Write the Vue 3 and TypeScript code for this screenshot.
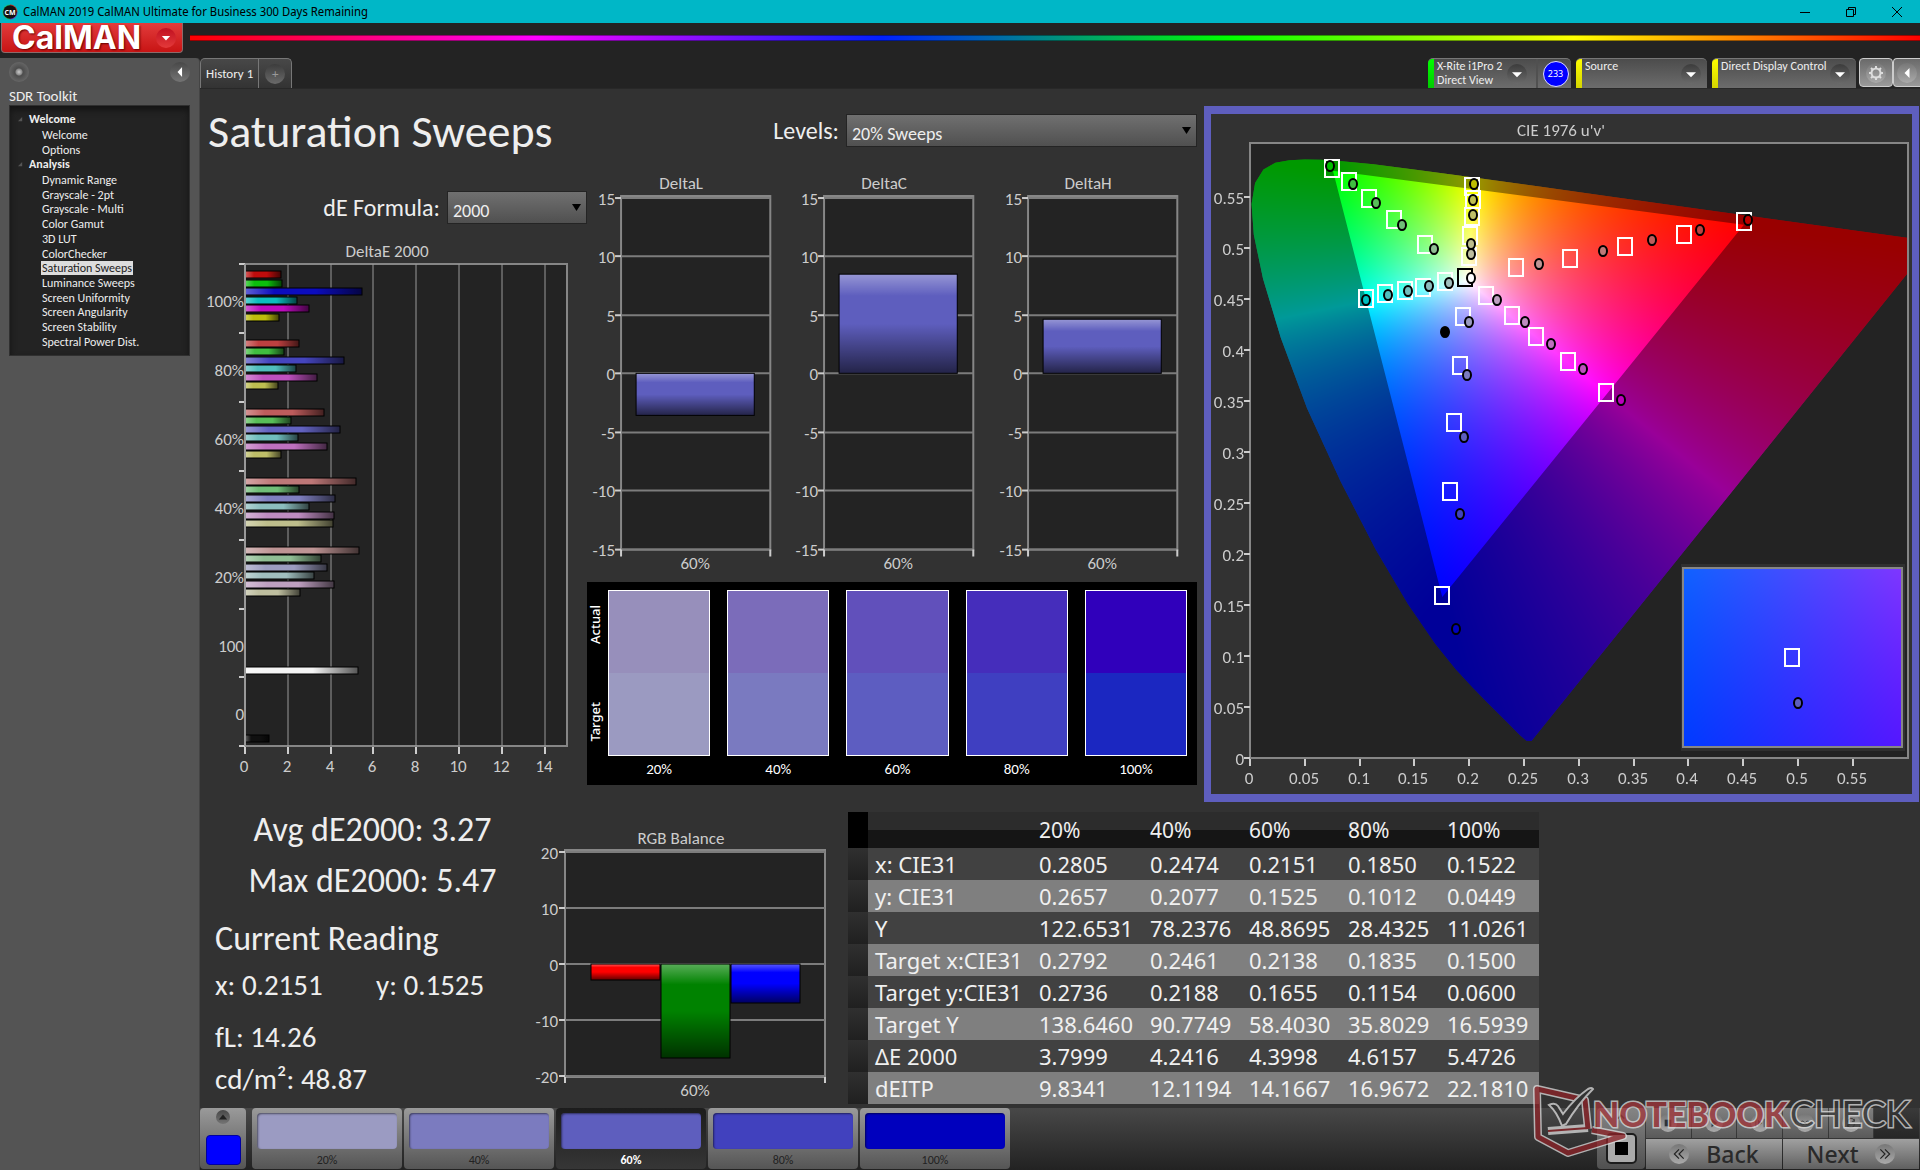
<script setup lang="ts">
import { onMounted, ref } from 'vue'

type Point = [number, number]
interface Marker { at: Point; fill: string }

const sections = [
  { title: 'Welcome', items: ['Welcome', 'Options'] },
  {
    title: 'Analysis',
    items: [
      'Dynamic Range', 'Grayscale - 2pt', 'Grayscale - Multi', 'Color Gamut', '3D LUT', 'ColorChecker',
      'Saturation Sweeps', 'Luminance Sweeps', 'Screen Uniformity', 'Screen Angularity',
      'Screen Stability', 'Spectral Power Dist.',
    ],
  },
]
const currentPage = 'Saturation Sweeps'

/* DeltaE bar chart: one group of R, G, B, C, M, Y per saturation level */
const deltaE = [
  { label: '100%', values: [1.69, 1.73, 5.47, 2.45, 3.0, 1.6], colors: ['#be0c0c', '#0cbe0c', '#0c0cbe', '#0cbebe', '#be0cbe', '#bebe0c'] },
  { label: '80%', values: [2.53, 1.81, 4.62, 2.4, 3.37, 1.54], colors: ['#be4040', '#40be40', '#4545be', '#50bebe', '#be50be', '#bebe50'] },
  { label: '60%', values: [3.7, 2.14, 4.45, 2.47, 3.84, 1.69], colors: ['#be5c5c', '#58be58', '#6262c0', '#70bebe', '#be70be', '#bebe68'] },
  { label: '40%', values: [5.2, 2.53, 4.22, 3.0, 4.17, 4.1], colors: ['#be7878', '#70be78', '#7f7fc0', '#8cbebe', '#be8cc0', '#bebe8c'] },
  { label: '20%', values: [5.34, 3.57, 3.84, 3.24, 4.17, 2.58], colors: ['#be9494', '#90be94', '#9c9cc0', '#a0bebe', '#be9fc0', '#bebe9f'] },
  { label: '100', values: [5.3], colors: ['#f4f4f4'] },
  { label: '0', values: [1.13], colors: ['#101010'] },
]
const deUnit = 21.4
const deBars = deltaE.flatMap((group, g) =>
  group.values.map((value, i) => ({
    width: Math.round(value * deUnit),
    y: Math.round((group.values.length === 1 ? 82 : 31) + g * 68.9 + i * 8.5),
    color: group.colors[i],
  })),
)
const deTicks = [0, 2, 4, 6, 8, 10, 12, 14]
const deTickX = (t: number) => Math.round(41 + t * deUnit)
const deTickY = (n: number) => Math.round(24 + n * 68.9)

const deltaCharts = [
  { title: 'DeltaL', top: 0, bottom: -3.6 },
  { title: 'DeltaC', top: 8.5, bottom: 0 },
  { title: 'DeltaH', top: 4.6, bottom: 0 },
]
const deltaTicks = [15, 10, 5, 0, -5, -10, -15]
const deltaY = (v: number) => Math.round(201 - v * 11.7)

const rgbTicks = [20, 10, 0, -10, -20]
const rgbY = (v: number) => Math.round(144 - v * 5.6)
const rgbBars = [
  { value: -2.8, color: '#ff0000' },
  { value: -16.7, color: '#008200' },
  { value: -7, color: '#0000ff' },
]

const levels = [
  { label: '20%', actual: '#978fbb', target: '#9b9ac1' },
  { label: '40%', actual: '#7b6cba', target: '#7a7ac0' },
  { label: '60%', actual: '#6150bb', target: '#5d5dc1' },
  { label: '80%', actual: '#452dbb', target: '#3f3fc1' },
  { label: '100%', actual: '#3000bb', target: '#1b27c1' },
]
const steps = [
  { label: '20%', color: '#9b9bc2' },
  { label: '40%', color: '#7b7bbf' },
  { label: '60%', color: '#5e5ebe' },
  { label: '80%', color: '#4141be' },
  { label: '100%', color: '#0000be' },
]

const rows = [
  ['x: CIE31', '0.2805', '0.2474', '0.2151', '0.1850', '0.1522'],
  ['y: CIE31', '0.2657', '0.2077', '0.1525', '0.1012', '0.0449'],
  ['Y', '122.6531', '78.2376', '48.8695', '28.4325', '11.0261'],
  ['Target x:CIE31', '0.2792', '0.2461', '0.2138', '0.1835', '0.1500'],
  ['Target y:CIE31', '0.2736', '0.2188', '0.1655', '0.1154', '0.0600'],
  ['Target Y', '138.6460', '90.7749', '58.4030', '35.8029', '16.5939'],
  ['ΔE 2000', '3.7999', '4.2416', '4.3998', '4.6157', '5.4726'],
  ['dEITP', '9.8341', '12.1194', '14.1667', '16.9672', '22.1810'],
]

/* CIE 1976 diagram, in the units of its viewBox */
const cieW = 701
const cieH = 680
const plotX = (u: number) => Math.round(39 + u * 1096)
const plotY = (v: number) => Math.round(644 - v * 1020)
const cieTicks = Array.from({ length: 12 }, (_, i) => Math.round(i * 5) / 100)

const targets: Point[] = [
  [121, 54], [138, 67], [158, 84], [183, 105], [214, 130],
  [261, 72], [262, 85], [261, 102], [259, 121], [258, 142],
  [533, 107], [473, 120], [414, 132], [359, 144], [305, 153],
  [155, 184], [174, 179], [194, 176], [212, 173], [234, 167],
  [275, 181], [301, 201], [325, 222], [357, 247], [395, 278],
  [252, 202], [249, 251], [243, 308], [239, 377], [231, 481],
  [581, 543],
]
const readings: Marker[] = [
  { at: [119, 52], fill: '#00be00' }, { at: [142, 70], fill: '#40be40' }, { at: [165, 89], fill: '#58be58' },
  { at: [191, 111], fill: '#70be78' }, { at: [223, 135], fill: '#90be94' },
  { at: [263, 70], fill: '#bebe00' }, { at: [262, 86], fill: '#bebe50' }, { at: [262, 101], fill: '#bebe68' },
  { at: [260, 140], fill: '#bebe9f' }, { at: [260, 130], fill: '#bebe8c' },
  { at: [537, 106], fill: '#be0000' }, { at: [489, 116], fill: '#be4040' }, { at: [441, 126], fill: '#be5c5c' },
  { at: [392, 137], fill: '#be7878' }, { at: [328, 150], fill: '#be9494' },
  { at: [155, 186], fill: '#00bebe' }, { at: [177, 181], fill: '#50bebe' }, { at: [197, 177], fill: '#70bebe' },
  { at: [218, 172], fill: '#8cbebe' }, { at: [238, 169], fill: '#a0bebe' },
  { at: [286, 186], fill: '#be9fc0' }, { at: [314, 208], fill: '#be8cc0' }, { at: [340, 230], fill: '#be70be' },
  { at: [372, 255], fill: '#be50be' }, { at: [410, 286], fill: '#be00be' },
  { at: [258, 208], fill: '#9b9bc2' }, { at: [256, 261], fill: '#7b7bbf' }, { at: [253, 323], fill: '#5e5ebe' },
  { at: [249, 400], fill: '#4141be' }, { at: [245, 515], fill: '#0000be' },
  { at: [260, 164], fill: '#ffffff' }, { at: [234, 218], fill: '#000000' }, { at: [587, 589], fill: '#5e5ebe' },
]

/* spectral locus, CIE 1931 xy */
const locus: Point[] = [
  [0.1741, 0.005], [0.1714, 0.0051], [0.1689, 0.0069], [0.1644, 0.0109], [0.1566, 0.0177], [0.151, 0.0227],
  [0.144, 0.0297], [0.1355, 0.0399], [0.1241, 0.0578], [0.1096, 0.0868], [0.0913, 0.1327], [0.0687, 0.2007],
  [0.0454, 0.295], [0.0235, 0.4127], [0.0082, 0.5384], [0.0039, 0.6548], [0.0139, 0.7502], [0.0389, 0.812],
  [0.0743, 0.8338], [0.1142, 0.8262], [0.1547, 0.8059], [0.1929, 0.7816], [0.2296, 0.7543], [0.3016, 0.6923],
  [0.3731, 0.6245], [0.4441, 0.5547], [0.5125, 0.4866], [0.5752, 0.4242], [0.627, 0.3725], [0.6915, 0.3083],
  [0.7347, 0.2653],
]
const gamut: Point[] = [[0.64, 0.33], [0.21, 0.71], [0.15, 0.06]]

const canvas = ref<HTMLCanvasElement | null>(null)

function toPlot([x, y]: Point): Point {
  const d = -2 * x + 12 * y + 3
  return [39 + ((4 * x) / d) * 1096, 644 - ((9 * y) / d) * 1020]
}

function colorAt(u: number, v: number): [number, number, number] {
  const X = 9 * u
  const Y = 4 * v
  const Z = 12 - 3 * u - 20 * v
  const r = Math.max(0, 2.0414 * X - 0.5649 * Y - 0.3447 * Z)
  const g = Math.max(0, -0.9693 * X + 1.876 * Y + 0.0416 * Z)
  const b = Math.max(0, 0.0134 * X - 0.1184 * Y + 1.0154 * Z)
  const k = 255 / Math.max(r, g, b, 0.0001)
  return [r * k, g * k, b * k]
}

function paint(w: number, h: number, uv: (x: number, y: number) => Point): HTMLCanvasElement {
  const layer = document.createElement('canvas')
  layer.width = w
  layer.height = h
  const c = layer.getContext('2d')!
  const image = c.createImageData(w, h)
  for (let y = 0; y < h; y++) {
    for (let x = 0; x < w; x++) {
      const [u, v] = uv(x, y)
      const [r, g, b] = colorAt(u, v)
      const i = (y * w + x) * 4
      image.data[i] = r
      image.data[i + 1] = g
      image.data[i + 2] = b
      image.data[i + 3] = 255
    }
  }
  c.putImageData(image, 0, 0)
  return layer
}

function trace(c: CanvasRenderingContext2D, points: Point[]) {
  points.map(toPlot).forEach(([x, y], i) => (i ? c.lineTo(x, y) : c.moveTo(x, y)))
  c.closePath()
}

onMounted(() => {
  const c = canvas.value?.getContext('2d')
  if (!c) return
  const spectrum = paint(cieW, cieH, (x, y) => [(x - 39) / 1096, (644 - y) / 1020])
  c.save()
  c.beginPath()
  c.rect(39, 30, 657, 614)
  c.clip()
  c.beginPath()
  trace(c, locus)
  c.clip()
  c.drawImage(spectrum, 0, 0)
  c.beginPath()
  c.rect(0, 0, cieW, cieH)
  trace(c, gamut)
  c.fillStyle = 'rgba(0, 0, 0, 0.4)'
  c.fill('evenodd')
  c.restore()
  c.fillStyle = '#303030'
  c.fillRect(470, 450, 224, 187)
  const detail = paint(219, 179, (x, y) => [0.1865 + (x - 110) / 2430, 0.33 - (y - 90) / 3060])
  c.drawImage(detail, 472, 454)
})
</script>

<template>
  <div class="app">
    <header class="titlebar">
      <svg class="app-icon" viewBox="0 0 16 16" aria-hidden="true">
        <circle cx="8" cy="8" r="7.5" fill="#2b6" />
        <path d="M8 .5A7.5 7.5 0 0 1 15.5 8L8 8Z" fill="#c33" />
        <path d="M15.5 8A7.5 7.5 0 0 1 8 15.5L8 8Z" fill="#63c" />
        <circle cx="8" cy="8" r="6.8" fill="#111" />
        <text x="8" y="11" text-anchor="middle" class="app-icon-text">CM</text>
      </svg>
      <span class="window-title">CalMAN 2019 CalMAN Ultimate for Business 300 Days Remaining</span>
      <button class="win" aria-label="Minimize"><svg viewBox="0 0 12 12"><path d="M1 6.5h10" /></svg></button>
      <button class="win" aria-label="Restore"><svg viewBox="0 0 12 12"><path d="M1.5 3.5h7v7h-7zM3.5 3.5v-2h7v7h-2" /></svg></button>
      <button class="win" aria-label="Close"><svg viewBox="0 0 12 12"><path d="M1 1l10 10M11 1L1 11" /></svg></button>
    </header>

    <div class="brandbar">
      <button class="brand">
        <span>CalMAN</span>
        <i class="round red"><svg viewBox="0 0 12 12"><path d="M1 3.5h10L6 9z" fill="#fff" /></svg></i>
      </button>
      <div class="rainbow"></div>
    </div>

    <div class="body">
      <aside class="sidebar">
        <div class="side-tools">
          <button class="round dot" aria-label="Pin"></button>
          <button class="round" aria-label="Collapse"><svg viewBox="0 0 12 12"><path d="M8.5 0v12L3 6z" fill="#fff" /></svg></button>
        </div>
        <h2>SDR Toolkit</h2>
        <nav class="tree">
          <section v-for="s in sections" :key="s.title">
            <h3><svg viewBox="0 0 6 6"><path d="M5 0v5H0z" fill="#555" /></svg>{{ s.title }}</h3>
            <ul>
              <li v-for="item in s.items" :key="item">
                <a href="#" :class="{ current: item === currentPage }">{{ item }}</a>
              </li>
            </ul>
          </section>
        </nav>
      </aside>

      <main class="workspace">
        <div class="tabs">
          <div class="tab-group">
            <button class="tab">History 1</button>
            <button class="tab add" aria-label="Add history"><i class="round dark">+</i></button>
          </div>
          <div class="devices">
            <div class="device meter">
              <span class="status green"></span>
              <button class="device-name">X-Rite i1Pro 2<br />Direct View</button>
              <i class="round dark"><svg viewBox="0 0 12 12"><path d="M0 4h12L6 10z" fill="#fff" /></svg></i>
              <span class="badge-cell"><span class="badge">233</span></span>
            </div>
            <div class="device source">
              <span class="status"></span>
              <button class="device-name">Source</button>
              <i class="round dark"><svg viewBox="0 0 12 12"><path d="M0 4h12L6 10z" fill="#fff" /></svg></i>
            </div>
            <div class="device display">
              <span class="status"></span>
              <button class="device-name">Direct Display Control</button>
              <i class="round dark"><svg viewBox="0 0 12 12"><path d="M0 4h12L6 10z" fill="#fff" /></svg></i>
            </div>
            <button class="square" aria-label="Settings">
              <i class="round light"><svg viewBox="0 0 16 16" class="gear"><circle cx="8" cy="8" r="4.5" fill="none" stroke="#ddd" stroke-width="2" /><path d="M8 1v2M8 13v2M1 8h2M13 8h2M3 3l1.5 1.5M11.5 11.5L13 13M13 3l-1.5 1.5M4.5 11.5L3 13" stroke="#ddd" stroke-width="2" /></svg></i>
            </button>
            <button class="square last" aria-label="Expand">
              <i class="round light"><svg viewBox="0 0 12 12"><path d="M9 0v12L3 6z" fill="#fff" /></svg></i>
            </button>
          </div>
        </div>

        <div class="content">
          <svg class="defs" aria-hidden="true">
            <defs>
              <linearGradient id="shade-h" x1="0" x2="1" y1="0" y2="0">
                <stop offset="0" stop-color="#fff" stop-opacity=".35" />
                <stop offset=".25" stop-color="#fff" stop-opacity="0" />
                <stop offset=".6" stop-color="#000" stop-opacity="0" />
                <stop offset="1" stop-color="#000" stop-opacity=".65" />
              </linearGradient>
              <linearGradient id="shade-v" x1="0" x2="0" y1="0" y2="1">
                <stop offset="0" stop-color="#fff" stop-opacity=".35" />
                <stop offset=".22" stop-color="#fff" stop-opacity="0" />
                <stop offset=".5" stop-color="#000" stop-opacity="0" />
                <stop offset="1" stop-color="#000" stop-opacity=".62" />
              </linearGradient>
            </defs>
          </svg>

          <div class="upper">
            <section class="col-a">
              <h1>Saturation Sweeps</h1>
              <div class="field formula">
                <label for="formula">dE Formula:</label>
                <span class="select"><select id="formula"><option>2000</option></select></span>
              </div>
              <svg class="chart" viewBox="0 0 383 545" role="img" aria-label="DeltaE 2000">
                <text x="183" y="11" class="mid">DeltaE 2000</text>
                <rect x="41" y="24" width="322" height="482" class="plot" />
                <g v-for="t in deTicks" :key="t">
                  <line :x1="deTickX(t)" :x2="deTickX(t)" y1="24" y2="506" class="grid" />
                  <line :x1="deTickX(t)" :x2="deTickX(t)" y1="507" y2="514" class="tick" />
                  <text :x="deTickX(t) - 1" y="526" class="mid">{{ t }}</text>
                </g>
                <line v-for="n in 8" :key="n" x1="35" x2="41" :y1="deTickY(n - 1)" :y2="deTickY(n - 1)" class="tick" />
                <text v-for="(g, i) in deltaE" :key="g.label" x="40" :y="deTickY(i) + 37" class="end">{{ g.label }}</text>
                <g v-for="(b, i) in deBars" :key="i">
                  <rect x="41" :y="b.y" :width="b.width" height="7" :fill="b.color" />
                  <rect x="41" :y="b.y" :width="b.width" height="7" fill="url(#shade-h)" class="outline" />
                </g>
                <line x1="41" x2="41" y1="24" y2="506" class="axis" />
              </svg>
            </section>

            <section class="col-b">
              <div class="field levels">
                <label for="levels">Levels:</label>
                <span class="select"><select id="levels"><option>20% Sweeps</option></select></span>
              </div>
              <div class="deltas">
                <svg v-for="d in deltaCharts" :key="d.title" class="chart" viewBox="0 0 203 408" role="img" :aria-label="d.title">
                  <text x="94" y="11" class="mid">{{ d.title }}</text>
                  <rect x="34" y="24" width="149" height="353" class="plot" />
                  <line x1="34" x2="183" y1="25" y2="25" class="band" />
                  <g v-for="t in deltaTicks" :key="t">
                    <line x1="34" x2="183" :y1="deltaY(t)" :y2="deltaY(t)" class="grid" />
                    <line x1="28" x2="34" :y1="deltaY(t)" :y2="deltaY(t)" class="tick" />
                    <text x="28" :y="deltaY(t) + 1" class="end">{{ t }}</text>
                  </g>
                  <path d="M34 377v7M183 377v7" class="tick" />
                  <rect x="49" :y="deltaY(d.top)" width="118" :height="deltaY(d.bottom) - deltaY(d.top)" fill="#5e5ebe" />
                  <rect x="49" :y="deltaY(d.top)" width="118" :height="deltaY(d.bottom) - deltaY(d.top)" fill="url(#shade-v)" class="outline" />
                  <text x="108" y="391" class="mid">60%</text>
                </svg>
              </div>
              <div class="swatches">
                <div class="swatch-axis"><span>Actual</span><span>Target</span></div>
                <figure v-for="l in levels" :key="l.label">
                  <div class="pair">
                    <div :style="{ background: l.actual }"></div>
                    <div :style="{ background: l.target }"></div>
                  </div>
                  <figcaption>{{ l.label }}</figcaption>
                </figure>
              </div>
            </section>

            <section class="cie">
              <svg class="cie-base" viewBox="0 0 701 680" aria-hidden="true">
                <rect x="39" y="29" width="658" height="615" class="plot" />
              </svg>
              <canvas ref="canvas" :width="cieW" :height="cieH"></canvas>
              <svg class="chart" viewBox="0 0 701 680" role="img" aria-label="CIE 1976 u'v' diagram">
                <text x="350" y="16" class="mid">CIE 1976 u'v'</text>
                <rect x="39" y="29" width="658" height="615" class="frame" />
                <g v-for="t in cieTicks" :key="t">
                  <line :x1="plotX(t)" :x2="plotX(t)" y1="645" y2="652" class="tick" />
                  <text :x="plotX(t) - 1" y="664" class="mid">{{ t }}</text>
                  <line x1="33" x2="39" :y1="plotY(t)" :y2="plotY(t)" class="tick" />
                  <text x="33" :y="plotY(t) + 1" class="end">{{ t }}</text>
                </g>
                <rect x="472" y="454" width="219" height="179" class="frame" />
                <rect v-for="(p, i) in targets" :key="'t' + i" :x="p[0] - 7" :y="p[1] - 8" width="14" height="17" class="target" />
                <rect x="247" y="155" width="14" height="17" class="target white-point" />
                <ellipse v-for="(m, i) in readings" :key="'m' + i" :cx="m.at[0]" :cy="m.at[1]" rx="4" ry="5" :fill="m.fill" class="reading" />
              </svg>
            </section>
          </div>

          <div class="lower">
            <section class="readouts">
              <p class="stat">Avg dE2000: 3.27</p>
              <p class="stat">Max dE2000: 5.47</p>
              <h2>Current Reading</h2>
              <div class="xy"><span>x: 0.2151</span><span>y: 0.1525</span></div>
              <p class="lum first">fL: 14.26</p>
              <p class="lum">cd/m²: 48.87</p>
            </section>

            <svg class="chart rgb" viewBox="0 0 318 285" role="img" aria-label="RGB Balance">
              <text x="151" y="18" class="mid">RGB Balance</text>
              <rect x="35" y="30" width="260" height="227" class="plot" />
              <line x1="35" x2="295" y1="31" y2="31" class="band" />
              <g v-for="t in rgbTicks" :key="t">
                <line x1="35" x2="295" :y1="rgbY(t)" :y2="rgbY(t)" class="grid" />
                <line x1="29" x2="35" :y1="rgbY(t)" :y2="rgbY(t)" class="tick" />
                <text x="28" :y="rgbY(t) + 1" class="end">{{ t }}</text>
              </g>
              <path d="M35 257v6M295 257v6" class="tick" />
              <g v-for="(b, i) in rgbBars" :key="i">
                <rect :x="61 + i * 70" y="144" width="69" :height="rgbY(b.value) - 144" :fill="b.color" />
                <rect :x="61 + i * 70" y="144" width="69" :height="rgbY(b.value) - 144" fill="url(#shade-v)" class="outline" />
              </g>
              <text x="165" y="270" class="mid">60%</text>
            </svg>

            <table>
              <colgroup><col class="c-mark" /><col class="c-label" /><col class="c-first" /><col /><col /><col /><col /></colgroup>
              <thead>
                <tr><td class="mark"></td><td></td><th v-for="l in levels" :key="l.label" scope="col">{{ l.label }}</th></tr>
              </thead>
              <tbody>
                <tr v-for="r in rows" :key="r[0]">
                  <td class="mark"></td>
                  <th scope="row">{{ r[0] }}</th>
                  <td v-for="(c, i) in r.slice(1)" :key="i">{{ c }}</td>
                </tr>
              </tbody>
            </table>
          </div>
        </div>

        <footer class="bottombar">
          <button class="pattern" aria-label="Pattern color">
            <i class="round small"><svg viewBox="0 0 12 12"><path d="M1 9h10L6 3z" fill="#222" /></svg></i>
            <span class="pattern-color"></span>
          </button>
          <button v-for="s in steps" :key="s.label" class="step" :class="{ active: s.label === '60%' }">
            <span class="step-color" :style="{ background: s.color }"></span>
            <span>{{ s.label }}</span>
          </button>
          <div class="controls">
            <div class="stop">
              <button class="stop-top" aria-label="Show"><svg viewBox="0 0 12 12"><path d="M2 8l4-4 4 4" /></svg></button>
              <button class="stop-main" aria-label="Stop"><i></i></button>
            </div>
            <div class="transport">
              <div class="row">
                <button aria-label="Stop reading"><i class="round light small"><svg viewBox="0 0 12 12"><path d="M2 2h8v8H2z" fill="#333" /></svg></i></button>
                <button aria-label="Play"><i class="round light small"><svg viewBox="0 0 12 12"><path d="M3 1l7 5-7 5z" fill="#333" /></svg></i></button>
                <button aria-label="Step"><i class="round light small"><svg viewBox="0 0 12 12"><path d="M1 1v10M11 1v10M4 3l4 3-4 3z" fill="#333" stroke="#333" /></svg></i></button>
                <button aria-label="Continuous"><i class="round light small"><svg viewBox="0 0 12 12"><path d="M6 6C4 3 1 3 1 6s3 3 5 0 5-3 5 0-3 3-5 0" fill="none" stroke="#333" /></svg></i></button>
                <button aria-label="Refresh"><i class="round light small"><svg viewBox="0 0 12 12"><path d="M10 4a4 4 0 0 0-8 1M2 8a4 4 0 0 0 8-1M10 1v3H7M2 11V8h3" fill="none" stroke="#333" /></svg></i></button>
                <button class="off" disabled aria-label="Unavailable"><i class="round small"></i></button>
              </div>
              <div class="row nav">
                <button><i class="round light"><svg viewBox="0 0 12 12"><path d="M6 2L2 6l4 4M10 2L6 6l4 4" fill="none" stroke="#222" /></svg></i>Back</button>
                <button>Next<i class="round light"><svg viewBox="0 0 12 12"><path d="M2 2l4 4-4 4M6 2l4 4-4 4" fill="none" stroke="#222" /></svg></i></button>
              </div>
            </div>
          </div>
        </footer>
      </main>
    </div>

    <svg class="watermark" viewBox="0 0 385 84" role="img" aria-label="Notebookcheck">
      <path d="M58 47L55 18L7 7L8 55L38 71L93 54L62 48" class="wm-edge" />
      <path d="M18 49L58 46" class="wm-edge" />
      <path d="M58 47L55 18L7 7L8 55L38 71L93 54L62 48" class="wm-red" />
      <path d="M18 49L58 46" class="wm-red thin" />
      <path d="M19 23q6-3 9 1l5 8q12-16 25-25q4-2 5 0q-15 15-27 35l-4 2q-5-14-13-21z" class="wm-check" />
      <text x="63" y="45" class="wm-text bold">NOTEBOOK</text>
      <text x="260" y="45" class="wm-text">CHECK</text>
    </svg>
  </div>
</template>

<style>
body { margin: 0; background: #232323; }
</style>

<style scoped>
.app {
  --ui: Carlito, Lato, "Open Sans", sans-serif;
  position: relative;
  display: flex;
  flex-direction: column;
  min-height: 100vh;
  overflow: hidden;
  background: #232323;
  color: #eee;
  font: 16px/20px var(--ui);
}
*, *::before, *::after { box-sizing: border-box; }
button, select { margin: 0; padding: 0; border: 0; background: none; color: inherit; font: inherit; }
h1, h2, h3, p, ul, figure { margin: 0; padding: 0; font-weight: 400; }
ul { list-style: none; }
a { color: inherit; text-decoration: none; }
i { font-style: normal; }

.titlebar { display: flex; align-items: center; height: 23px; padding-left: 2px; background: #00b7c7; color: #000; }
.app-icon { width: 16px; height: 16px; margin-right: 5px; }
.app-icon-text { font: 700 7px "Open Sans", sans-serif; fill: #fff; }
.window-title { flex: 1; font: 12px/20px "Noto Sans Display", "Open Sans", sans-serif; }
.win { display: grid; place-items: center; width: 46px; height: 22px; }
.win svg { width: 12px; height: 12px; fill: none; stroke: #000; }

.brandbar { display: flex; align-items: flex-start; gap: 7px; height: 35px; }
.brand {
  display: flex; align-items: center; width: 182px; height: 30px; margin-left: 1px; padding-left: 10px;
  border: 1px solid #8d6a6a; border-top: 0; border-radius: 0 0 4px 4px;
  background: linear-gradient(#e23c3c, #c81414);
  color: #fff; font: 700 32px/28px Inter, sans-serif; text-shadow: 1px 1px 2px #600;
}
.brand span { flex: 1; text-align: left; }
.rainbow {
  flex: 1; height: 6px; margin-top: 12px;
  background: linear-gradient(90deg, #f00, #f0f 20%, #0020ff 40%, #0f0 60%, #ff0 80%, #f00);
  box-shadow: inset 0 1px rgba(0, 0, 0, .4), inset 0 -1px rgba(0, 0, 0, .4);
}

.round {
  display: grid; place-items: center; flex: none; width: 20px; height: 20px; border-radius: 50%;
  background: linear-gradient(#484848, #747474);
}
.round svg { width: 10px; height: 10px; }
.round.red { margin-right: 6px; background: linear-gradient(#c01020, #e43a3a); }
.round.dark { background: linear-gradient(#3c3c3c, #6a6a6a); color: #999; line-height: 18px; }
.round.light { background: linear-gradient(#777, #aaa); }
.round.small { width: 14px; height: 14px; }
.round .gear { width: 16px; height: 16px; }

.body { display: flex; flex: 1; }
.sidebar { flex: none; width: 200px; padding: 4px 9px 0; border-radius: 0 4px 0 0; background: #545454; border-right: 1px solid #444; }
.side-tools { display: flex; justify-content: space-between; }
.dot { background: radial-gradient(circle, #ccc 0, #888 3px, #4c4c4c 4px, #666 10px); }
.sidebar h2 { margin-top: 3px; font-size: 15px; line-height: 22px; }
.tree {
  margin-top: -2px; padding: 6px 0 9px; height: 251px; border: 1px solid #303030; background: #232323;
  box-shadow: inset 0 4px 6px #141414;
}
.tree h3 { display: flex; align-items: center; gap: 6px; padding-left: 8px; font-size: 12px; line-height: 15px; font-weight: 700; }
.tree h3 svg { width: 5px; height: 5px; }
.tree ul { display: flex; flex-direction: column; justify-content: space-between; height: 30px; padding: 1px 0 0 31px; }
.tree section:last-child ul { height: 177px; }
.tree li { height: 14px; font-size: 12px; line-height: 14px; }
.tree li a { display: inline-block; padding: 0 1px; }
.tree .current { background: #ddd; color: #222; }

.workspace { display: flex; flex: 1; flex-direction: column; min-width: 0; background: #323232; }
.tabs { display: flex; justify-content: space-between; height: 31px; background: #232323; border-bottom: 1px solid #282828; }
.tab-group { display: flex; width: 92px; border: 1px solid #777; border-bottom: 0; border-radius: 5px 5px 0 0; background: linear-gradient(#484848, #333); }
.tab { width: 58px; color: #eee; font-size: 13px; }
.tab.add { display: grid; place-items: center; width: 33px; border-left: 1px solid #777; }
.devices { display: flex; align-items: flex-start; }
.device { display: flex; height: 30px; margin-right: 5px; padding-right: 6px; border-radius: 5px 5px 0 0; background: linear-gradient(#4c4c4c, #6c6c6c); overflow: hidden; border-top: 1px solid #777; }
.meter { width: 143px; padding-right: 0; }
.source { width: 131px; }
.display { width: 144px; margin-right: 3px; }
.status { width: 6px; background: linear-gradient(#ff0, #d4d400); }
.status.green { background: linear-gradient(#0f0, #0c0); }
.device-name { flex: 1; padding-left: 3px; font-size: 12px; line-height: 14px; text-align: left; white-space: nowrap; align-self: flex-start; }
.device .round { margin-top: 5px; }
.badge-cell { display: grid; place-items: center; width: 35px; margin-left: 9px; padding-left: 2px; border-left: 2px solid #505050; }
.badge { width: 26px; height: 26px; border: 1px solid #ddf; border-radius: 50%; background: #00f; color: #fff; font: 9px/24px "Noto Sans", sans-serif; text-align: center; }
.square { display: grid; place-items: center; width: 34px; height: 29px; border: 1px solid #ccc; border-radius: 4px; background: linear-gradient(#6a6a6a, #9a9a9a); }
.square.last { width: 27px; border-right: 0; border-radius: 4px 0 0 4px; }

.content { flex: 1; }
.defs { position: absolute; width: 0; height: 0; }
.upper { display: grid; grid-template-columns: 383fr 617fr 715fr; align-items: start; padding: 0 1px 0 4px; }
h1 { margin-top: 12px; padding-left: 4px; font-size: 46px; line-height: 60px; white-space: nowrap; }
.field { display: flex; align-items: center; justify-content: flex-end; gap: 7px; }
.field label { font-size: 24px; line-height: 33px; white-space: nowrap; }
.formula { margin: 30px 0 16px; }
.formula .select { width: 140px; }
.levels { margin-top: 25px; }
.levels .select { width: 351px; }
.select { position: relative; }
.select select {
  display: block; width: 100%; height: 33px; padding: 6px 5px 0; appearance: none; border: 1px solid #242424;
  background: linear-gradient(#707070, #505050); color: #eee; font-size: 18px; line-height: 24px;
}
.select::after { content: ""; position: absolute; top: 13px; right: 6px; width: 9px; height: 7px; background: #000; clip-path: polygon(0 0, 100% 0, 50% 100%); }

.chart { display: block; width: 100%; height: auto; overflow: visible; }
.chart text { font: 17px var(--ui); fill: #ccc; dominant-baseline: central; }
.chart .mid { text-anchor: middle; }
.chart .end { text-anchor: end; }
.plot { fill: #232323; stroke: #868686; stroke-width: 2; }
.frame { fill: none; stroke: #868686; stroke-width: 2; }
.grid { stroke: #7c7c7c; stroke-width: 2; }
.col-a .grid { stroke-width: 1; stroke: #999; }
.axis { stroke: #999; stroke-width: 2; }
.band { stroke: #868686; stroke-width: 4; }
.tick { fill: none; stroke: #ccc; stroke-width: 2; }
.outline { stroke: #000; stroke-width: 1; }
.target { fill: none; stroke: #fff; stroke-width: 2; }
.white-point { stroke: #000; }
.reading { stroke: #000; stroke-width: 2; }

.col-b { padding-right: 7px; }
.deltas { display: grid; grid-template-columns: repeat(3, 1fr); margin-top: 25px; }
.swatches { display: flex; gap: 17px; height: 203px; margin-top: 1px; padding: 8px 10px 0 0; background: #000; }
.swatch-axis { display: flex; flex-direction: column; justify-content: space-between; width: 17px; height: 166px; margin-right: -13px; padding: 15px 0 14px; }
.swatch-axis span { writing-mode: vertical-rl; transform: rotate(180deg); color: #fff; font: 500 13px/17px "Noto Sans", sans-serif; }
.swatches figure { flex: 1; }
.pair { display: flex; flex-direction: column; height: 166px; border: 1px solid #fff; }
.pair div { flex: 1; }
figcaption { padding-top: 4px; color: #fff; font-size: 15px; line-height: 18px; text-align: center; }

.cie { display: grid; margin-top: 17px; border: solid #5e5ebe; border-width: 8px 7px; background: #323232; }
.cie > * { grid-area: 1 / 1; width: 100%; height: auto; display: block; }

.lower { display: grid; grid-template-columns: 326fr 318fr 691fr 380fr; align-items: start; padding: 0 1px 0 4px; margin-top: 1px; }
.readouts { padding-top: 1px; }
.stat { padding-left: 11px; font-size: 34px; line-height: 51px; text-align: center; }
.readouts h2 { margin-top: 7px; padding-left: 11px; font-size: 34px; line-height: 52px; }
.xy { display: flex; padding-left: 11px; font-size: 29px; line-height: 40px; }
.xy span:first-child { width: 161px; }
.lum { padding-left: 11px; font-size: 29px; line-height: 42px; }
.lum.first { margin-top: 11px; }
.rgb { margin-top: 17px; }
table { width: 100%; margin-top: 9px; border-collapse: collapse; table-layout: fixed; font: 22px/24px "Noto Sans", sans-serif; color: #f0f0f0; }
.c-mark { width: 20px; }
.c-label { width: 164px; }
.c-first { width: 111px; }
table th, table td { height: 32px; padding: 0 0 0 7px; font-weight: 400; text-align: left; white-space: nowrap; }
thead th, thead td { height: 36px; background: linear-gradient(#2c2c2c 50%, #151515 50%); font-size: 21px; }
thead .mark { background: #000; }
tbody tr { background: #414141; }
tbody tr:nth-child(even) { background: #7f7f7f; }
tbody .mark { background: linear-gradient(#303030, #202020); }

.bottombar { display: flex; flex: none; height: 62px; background: linear-gradient(#484848, #222); }
.pattern, .step { border-radius: 4px; background: linear-gradient(#9a9a9a, #555); }
.pattern { display: flex; flex-direction: column; align-items: center; justify-content: space-between; width: 46px; height: 61px; margin-right: 6px; padding: 2px 0 4px; }
.pattern-color { width: 35px; height: 30px; border: 1px solid #0000a0; border-radius: 4px; background: #00f; }
.step { display: flex; flex-direction: column; width: 150px; height: 61px; margin-right: 2px; padding: 5px 5px 0; color: #222; font-size: 12px; line-height: 14px; }
.step-color { width: 140px; height: 36px; margin-bottom: 4px; border-radius: 4px; box-shadow: inset 1px 1px 2px rgba(0, 0, 0, .5); }
.step > span:last-child { width: 100%; text-align: center; }
.step.active { background: linear-gradient(#1c1c1c, #363636); color: #fff; font-weight: 700; }

.controls { display: flex; gap: 1px; margin-left: auto; padding-right: 1px; }
.stop { display: flex; flex-direction: column; width: 48px; height: 61px; border-radius: 4px; background: linear-gradient(#858585, #505050); }
.stop-top { display: grid; place-items: center; height: 18px; }
.stop-top svg { width: 10px; height: 10px; fill: none; stroke: #333; stroke-width: 2; }
.stop-main { display: grid; place-items: center; width: 31px; height: 31px; margin: 7px auto 0; border: 2px solid #1c1c1c; border-radius: 5px; background: #aaa; }
.stop-main i { width: 13px; height: 13px; background: #000; }
.transport { display: flex; flex-direction: column; gap: 1px; width: 273px; }
.row { display: flex; gap: 1px; height: 30px; }
.row button { display: grid; place-items: center; flex: 1; background: linear-gradient(#808080, #5a5a5a); }
.row .round.small { width: 18px; height: 18px; }
.row .off { background: linear-gradient(#3a3a3a, #262626); }
.row .off .round { background: #2c2c2c; }
.row.nav button { display: flex; align-items: center; justify-content: center; gap: 17px; background: linear-gradient(#a0a0a0, #606060); color: #2a2a2a; font: 500 23px/30px "Noto Sans", sans-serif; }
.nav .round svg { width: 14px; height: 14px; }

.watermark { position: absolute; right: 5px; bottom: 4px; width: 385px; height: 84px; opacity: .75; pointer-events: none; }
.wm-edge { fill: none; stroke: #ddd; stroke-width: 8; stroke-linejoin: round; }
.wm-red { fill: none; stroke: #8f2328; stroke-width: 5; stroke-linejoin: round; }
.wm-red.thin { stroke-width: 2; }
.wm-check { fill: #333; stroke: #ddd; stroke-width: 2; }
.wm-text { font: 400 36px Lato, sans-serif; fill: #333; stroke: #ddd; stroke-width: 3; paint-order: stroke; }
.wm-text.bold { font-size: 34px; font-weight: 900; fill: #a3353a; }
</style>
